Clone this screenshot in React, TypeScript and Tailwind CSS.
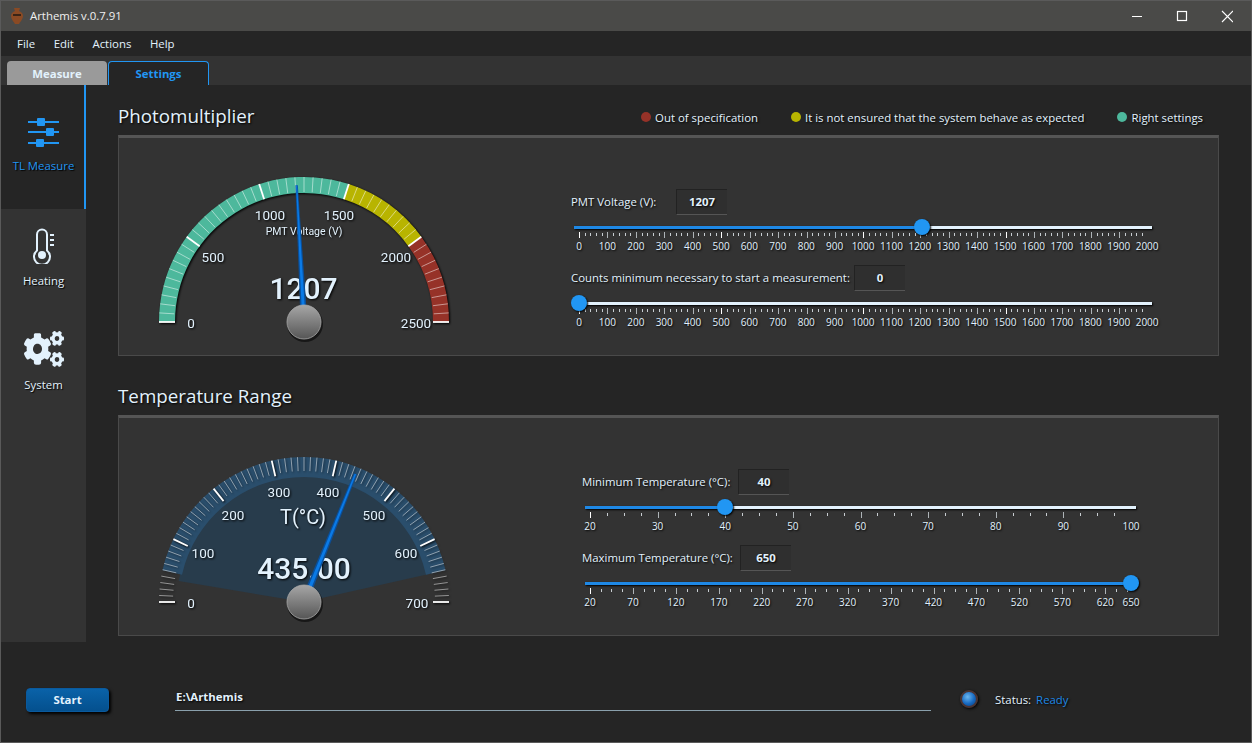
import React from "react";
import { FaCogs } from "react-icons/fa";

const GREEN = "#4db89c";
const YELLOW = "#b8b400";
const RED = "#963228";
const TEXT = "#e3f2fd";
const CX = 164;
const CY = 157;

// angle is measured from the left end of the dial, clockwise over the top
function pt(deg: number, r: number) {
  const a = (deg * Math.PI) / 180;
  return { x: CX - r * Math.cos(a), y: CY - r * Math.sin(a) };
}

function band(from: number, to: number, r0: number, r1: number) {
  const a = pt(from, r1);
  const b = pt(to, r1);
  const c = pt(to, r0);
  const d = pt(from, r0);
  return `M${a.x} ${a.y}A${r1} ${r1} 0 0 1 ${b.x} ${b.y}L${c.x} ${c.y}A${r0} ${r0} 0 0 0 ${d.x} ${d.y}Z`;
}

function Hub() {
  return (
    <g>
      <circle cx={CX + 1} cy={CY + 2} r={18} fill="#000" opacity={0.55} />
      <circle cx={CX} cy={CY} r={17} fill="url(#hub)" stroke="#a8a8a8" strokeWidth={0.8} />
    </g>
  );
}

function Needle({ deg, len, base, tipWidth = 1.2 }: { deg: number; len: number; base: number; tipWidth?: number }) {
  const tip = pt(deg, len);
  const side = { x: Math.sin((deg * Math.PI) / 180), y: -Math.cos((deg * Math.PI) / 180) };
  const poly = (w: number, t: number) =>
    `${CX + side.x * w} ${CY + side.y * w} ${tip.x + side.x * t} ${tip.y + side.y * t} ${tip.x - side.x * t} ${tip.y - side.y * t} ${CX - side.x * w} ${CY - side.y * w}`;
  return (
    <g>
      <polygon points={poly(base, tipWidth)} fill="#0a4f9a" />
      <polygon points={poly(base * 0.5, tipWidth * 0.45)} fill="#0a7ae6" />
    </g>
  );
}

function GaugeLabel({ x, y, size = 13.5, weight = 400, children }: { x: number; y: number; size?: number; weight?: number; children: React.ReactNode }) {
  return (
    <text x={x} y={y} textAnchor="middle" dominantBaseline="central" fontSize={size} fontWeight={weight} fill={TEXT} fontFamily="Roboto, sans-serif">
      {children}
    </text>
  );
}

function GaugeDefs() {
  return (
    <defs>
      <linearGradient id="hub" x1="0" y1="0" x2="0" y2="1">
        <stop offset="0" stopColor="#a6a6a6" />
        <stop offset="1" stopColor="#565656" />
      </linearGradient>
    </defs>
  );
}

function VoltageGauge() {
  const ticks = [];
  for (let v = 0; v <= 2500; v += 50) {
    const major = v % 500 === 0;
    const d = (v / 2500) * 180;
    const a = pt(d, major ? 129 : 130);
    const b = pt(d, 145);
    ticks.push(<line key={v} x1={a.x} y1={a.y} x2={b.x} y2={b.y} stroke="#fff" strokeWidth={major ? 1.8 : 0.7} opacity={major ? 1 : 0.7} />);
  }
  return (
    <svg width={320} height={185} className="shrink-0">
      <GaugeDefs />
      <g className="drop-shadow-[1px_1px_1px_#000]">
        <path d={band(0, 108, 129, 145)} fill={GREEN} />
        <path d={band(108, 144, 129, 145)} fill={YELLOW} />
        <path d={band(144, 180, 129, 145)} fill={RED} />
        {ticks}
        <GaugeLabel x={51} y={158}>0</GaugeLabel>
        <GaugeLabel x={73} y={92}>500</GaugeLabel>
        <GaugeLabel x={130} y={50}>1000</GaugeLabel>
        <GaugeLabel x={199} y={50}>1500</GaugeLabel>
        <GaugeLabel x={256} y={92}>2000</GaugeLabel>
        <GaugeLabel x={276} y={158}>2500</GaugeLabel>
        <GaugeLabel x={164} y={66} size={10.5}>PMT Voltage (V)</GaugeLabel>
        <GaugeLabel x={163.5} y={123} size={30} weight={500}>1207</GaugeLabel>
      </g>
      <Needle deg={(1207 / 2500) * 180} len={137} base={3.4} />
      <Hub />
    </svg>
  );
}

function TemperatureGauge() {
  const ticks = [];
  for (let v = 0; v <= 700; v += 10) {
    const major = v % 100 === 0;
    const d = (v / 700) * 180;
    const a = pt(d, major ? 129 : 131);
    const b = pt(d, 145);
    ticks.push(<line key={v} x1={a.x} y1={a.y} x2={b.x} y2={b.y} stroke="#fff" strokeWidth={major ? 1.8 : 0.7} opacity={major ? 1 : 0.7} />);
  }
  const l = pt(9.5, 127);
  const r = pt(167.4, 127);
  return (
    <svg width={320} height={185} className="shrink-0">
      <GaugeDefs />
      <path d={`M${CX} ${CY}L${l.x} ${l.y}A127 127 0 0 1 ${r.x} ${r.y}Z`} fill="#283c4c" />
      <path d={band(12.6, 167.4, 125, 145)} fill="#2a4e6c" />
      <g className="drop-shadow-[1px_1px_1px_#000]">
        {ticks}
        <GaugeLabel x={51} y={158}>0</GaugeLabel>
        <GaugeLabel x={63} y={108}>100</GaugeLabel>
        <GaugeLabel x={93} y={70}>200</GaugeLabel>
        <GaugeLabel x={139} y={47}>300</GaugeLabel>
        <GaugeLabel x={188} y={47}>400</GaugeLabel>
        <GaugeLabel x={234} y={70}>500</GaugeLabel>
        <GaugeLabel x={266} y={108}>600</GaugeLabel>
        <GaugeLabel x={277} y={158}>700</GaugeLabel>
        <GaugeLabel x={163} y={72} size={20}>T(°C)</GaugeLabel>
        <GaugeLabel x={164} y={123} size={30} weight={500}>435.00</GaugeLabel>
      </g>
      <Needle deg={(435 / 700) * 180} len={138} base={3.6} tipWidth={1.6} />
      <Hub />
    </svg>
  );
}

interface Mark {
  at: number;
  major: boolean;
  bright?: boolean;
}

interface SliderProps {
  min: number;
  max: number;
  value: number;
  stops: number[];
  minorPerStop: number;
  brightEvery?: number;
}

function Slider({ min, max, value, stops, minorPerStop, brightEvery }: SliderProps) {
  const pct = ((value - min) / (max - min)) * 100;
  const marks: Mark[] = [];
  stops.forEach((s, i) => {
    const next = stops[i + 1];
    const bright = brightEvery ? (s - min) % brightEvery === 0 : i === 0;
    marks.push({ at: s, major: true, bright });
    if (next === undefined) return;
    const step = (stops[1] - stops[0]) / (minorPerStop + 1);
    for (let m = s + step; m < next - 0.01; m += step) marks.push({ at: m, major: false });
  });
  return (
    <div className="px-[3px] pt-2">
      <div className="relative h-2 flex items-center">
        <div className="h-[3px] w-full bg-[#e3f2fd] shadow-[1px_1px_2px_#000]" />
        <div className="absolute inset-x-[5px] top-0 h-2">
          <div className="absolute left-[-5px] top-[2.5px] h-[3px] bg-[#1e88e5]" style={{ width: `calc(${pct}% + 5px)` }} />
          <div className="absolute top-[-4px] w-4 h-4 -ml-2 rounded-full bg-[#2196f3] shadow-[1px_1px_2px_#000]" style={{ left: `${pct}%` }} />
        </div>
      </div>
      <div className="mx-[5px] mt-px flex h-[6px]">
        {marks.map((m, i) => {
          const next = marks[i + 1];
          return (
            <div key={i} className={next ? "flex items-start" : "flex items-start w-0"} style={next ? { flexGrow: next.at - m.at, flexBasis: 0 } : undefined}>
              <div className={m.major ? (m.bright ? "w-px h-[6px] bg-white" : "w-px h-[6px] bg-[#aeb4b8]") : "w-px h-[3px] mt-px bg-[#c8ced2]"} />
            </div>
          );
        })}
      </div>
      <div className="mx-[5px] mt-[3px] flex h-[11px]">
        {stops.map((s, i) => {
          const next = stops[i + 1];
          return (
            <div key={s} className={next ? "flex" : "flex w-0"} style={next ? { flexGrow: next - s, flexBasis: 0 } : undefined}>
              <div className="w-0 flex justify-center text-[10px] leading-[11px] text-[#e3f2fd] [text-shadow:1px_1px_2px_#000]">{s}</div>
            </div>
          );
        })}
      </div>
    </div>
  );
}

function ValueRow({ label, value, labelWidth }: { label: string; value: number; labelWidth: string }) {
  return (
    <div className="flex items-center h-[26px]">
      <span className={`${labelWidth} text-[11.4px] text-[#e3f2fd] [text-shadow:1px_1px_2px_#000] whitespace-nowrap`}>{label}</span>
      <div className="w-[51px] h-[26px] flex items-center justify-center bg-[#2f2f2f] border-t border-l border-[#222] border-b border-b-[#555] text-[11.4px] font-bold text-[#e3f2fd] [text-shadow:1px_1px_2px_#000]">
        {value}
      </div>
    </div>
  );
}

function LegendItem({ color, label }: { color: string; label: string }) {
  return (
    <div className="flex items-center gap-1">
      <span className="w-[10px] h-[10px] rounded-full" style={{ backgroundColor: color }} />
      <span className="text-[11.4px] text-[#e3f2fd] [text-shadow:1px_1px_2px_#000]">{label}</span>
    </div>
  );
}

function SlidersIcon() {
  return (
    <svg width={32} height={29} viewBox="0 0 32 29" fill="#2196f3">
      <rect x={0} y={3} width={31} height={2} />
      <rect x={9} y={0} width={8} height={8} rx={1} />
      <rect x={0} y={13} width={31} height={2} />
      <rect x={18} y={10} width={8} height={8} rx={1} />
      <rect x={0} y={24} width={31} height={2} />
      <rect x={8} y={21} width={8} height={8} rx={1} />
    </svg>
  );
}

function ThermoIcon() {
  return (
    <svg width={22} height={36} viewBox="0 0 22 36" fill="none" stroke="#e3f2fd" className="ml-px">
      <path d="M4 21V5a5 5 0 0 1 10 0v16a8 8 0 1 1-10 0Z" strokeWidth={2} transform="translate(0 1.5)" />
      <circle cx={9} cy={27} r={4} fill="#e3f2fd" stroke="none" />
      <path d="M17 7h4M17 12h4M17 17h4" strokeWidth={2} />
    </svg>
  );
}

function SideItem({ icon, label, active, className, labelGap }: { icon: React.ReactNode; label: string; active?: boolean; className: string; labelGap: string }) {
  return (
    <div className={`flex flex-col items-center ${className} ${active ? "text-[#2196f3]" : "text-[#e3f2fd]"}`}>
      {icon}
      <span className={`${labelGap} text-[11.4px] [text-shadow:1px_1px_1px_#000]`}>{label}</span>
    </div>
  );
}

function Panel({ children }: { children: React.ReactNode }) {
  return (
    <div className="h-[221px] flex pl-[21px] pt-[27px] bg-[#333] border border-[#4a4a4a] border-t-[3px] border-t-[#555]">
      {children}
    </div>
  );
}

const PMT_STOPS = Array.from({ length: 21 }, (_, i) => i * 100);
const MIN_STOPS = [20, 30, 40, 50, 60, 70, 80, 90, 100];
const MAX_STOPS = [20, 70, 120, 170, 220, 270, 320, 370, 420, 470, 520, 570, 620, 650];

export default function App() {
  return (
    <div className="w-[1252px] h-[743px] flex flex-col border border-[#5a5a5a] bg-[#252525] overflow-hidden font-['Open_Sans',sans-serif]">
      <div className="h-[30px] shrink-0 flex items-center bg-[#4a4a48] text-[11.4px] text-[#f0f0f0]">
        <svg width={12} height={16} viewBox="0 0 12 16" className="ml-[10px] mr-[7px]">
          <path d="M3 0h6l-1 3c3 1 4 3 4 5 0 3-3 6-4 8H4C3 14 0 11 0 8c0-2 1-4 4-5Z" fill="#8a4a24" />
          <path d="M2 6h8v2H2Z" fill="#3a2416" />
        </svg>
        <span>Arthemis v.0.7.91</span>
        <svg width={101} height={14} viewBox="0 0 101 14" fill="none" stroke="#fff" className="ml-auto mr-[18px]">
          <path d="M0 7.5h10" />
          <rect x={45.5} y={2.5} width={9} height={9} strokeWidth={1.2} />
          <path d="M90 2l11 11M101 2L90 13" strokeWidth={1.1} />
        </svg>
      </div>
      <div className="h-[25px] shrink-0 flex items-center gap-[18.6px] pl-4 bg-[#252525] text-[11.4px] text-[#e3f2fd]">
        <span>File</span>
        <span>Edit</span>
        <span>Actions</span>
        <span>Help</span>
      </div>
      <div className="h-[29px] shrink-0 flex items-end pl-[6px] gap-px bg-[#333]">
        <div className="w-[100px] h-6 pt-px flex items-center justify-center rounded-t-sm bg-[#9a9a9a] text-[11.4px] font-bold text-[#e3f2fd]">Measure</div>
        <div className="w-[101px] h-6 pt-px flex items-center justify-center rounded-t-sm bg-[#252525] border border-b-0 border-[#2196f3] text-[11.4px] font-bold text-[#2196f3]">Settings</div>
      </div>

      <div className="flex h-[557px] shrink-0">
        <div className="w-[85px] shrink-0 bg-[#333] flex flex-col">
          <SideItem active icon={<SlidersIcon />} label="TL Measure" labelGap="mt-[10px]" className="h-[124px] pt-[33px] pl-[2px] bg-[#252525] border-r-2 border-[#2196f3]" />
          <SideItem icon={<ThermoIcon />} label="Heating" labelGap="mt-2" className="pt-[19px] h-[104px]" />
          <SideItem icon={<FaCogs preserveAspectRatio="none" className="w-10 h-[36px]" />} label="System" labelGap="mt-[9px]" className="pt-[18px]" />
        </div>
        <div className="flex-1 pl-8 pr-8">
          <div className="h-[50px] flex items-end pb-[6px] pr-4">
            <h1 className="text-[18.8px] leading-[26px] text-[#e3f2fd] [text-shadow:1px_1px_2px_#000]">Photomultiplier</h1>
            <div className="ml-auto flex gap-[33px] pb-[3px]">
              <LegendItem color={RED} label="Out of specification" />
              <LegendItem color={YELLOW} label="It is not ensured that the system behave as expected" />
              <LegendItem color={GREEN} label="Right settings" />
            </div>
          </div>
          <Panel>
            <VoltageGauge />
            <div className="ml-[111px] w-[584px] pt-6">
              <ValueRow label="PMT Voltage (V):" value={1207} labelWidth="w-[105px]" />
              <div className="h-[50px]">
                <Slider min={0} max={2000} value={1207} stops={PMT_STOPS} minorPerStop={4} brightEvery={500} />
              </div>
              <ValueRow label="Counts minimum necessary to start a measurement:" value={0} labelWidth="w-[283px]" />
              <Slider min={0} max={2000} value={0} stops={PMT_STOPS} minorPerStop={4} brightEvery={500} />
            </div>
          </Panel>
          <div className="h-[59px] flex items-end pb-[6px]">
            <h2 className="text-[18.8px] leading-[26px] text-[#e3f2fd] [text-shadow:1px_1px_2px_#000]">Temperature Range</h2>
          </div>
          <Panel>
            <TemperatureGauge />
            <div className="ml-[122px] w-[557px] pt-6">
              <ValueRow label="Minimum Temperature (°C):" value={40} labelWidth="w-[156px]" />
              <div className="h-[50px]">
                <Slider min={20} max={100} value={40} stops={MIN_STOPS} minorPerStop={3} />
              </div>
              <ValueRow label="Maximum Temperature (°C):" value={650} labelWidth="w-[158px]" />
              <Slider min={20} max={650} value={650} stops={MAX_STOPS} minorPerStop={3} />
            </div>
          </Panel>
        </div>
      </div>

      <div className="flex-1 flex items-start pl-[25px] pt-[46px]">
        <button className="w-[83px] h-6 rounded-sm bg-gradient-to-b from-[#0a62a8] to-[#04508e] border border-[#0a5a9e] text-[11.4px] font-bold text-[#e3f2fd] shadow-[2px_2px_3px_#000]">Start</button>
        <div className="ml-[66px] w-[756px] h-[23px] border-b border-[#8aa0ac] pl-px text-[11.4px] font-bold leading-[18px] text-[#e3f2fd] [text-shadow:1px_1px_2px_#000]">E:\Arthemis</div>
        <div className="ml-[29px] mt-[2px] w-[18px] h-[18px] rounded-full border-2 border-[#4a3434] bg-[radial-gradient(circle_at_40%_35%,#6cb6f0,#1668c0_55%,#0c3a70)] shadow-[1px_1px_3px_#000]" />
        <div className="ml-[17px] mt-[3px] flex gap-[5px] text-[11.4px] text-[#e3f2fd] [text-shadow:1px_1px_2px_#000]">
          <span>Status:</span>
          <span className="text-[#1e88e5]">Ready</span>
        </div>
      </div>
    </div>
  );
}
